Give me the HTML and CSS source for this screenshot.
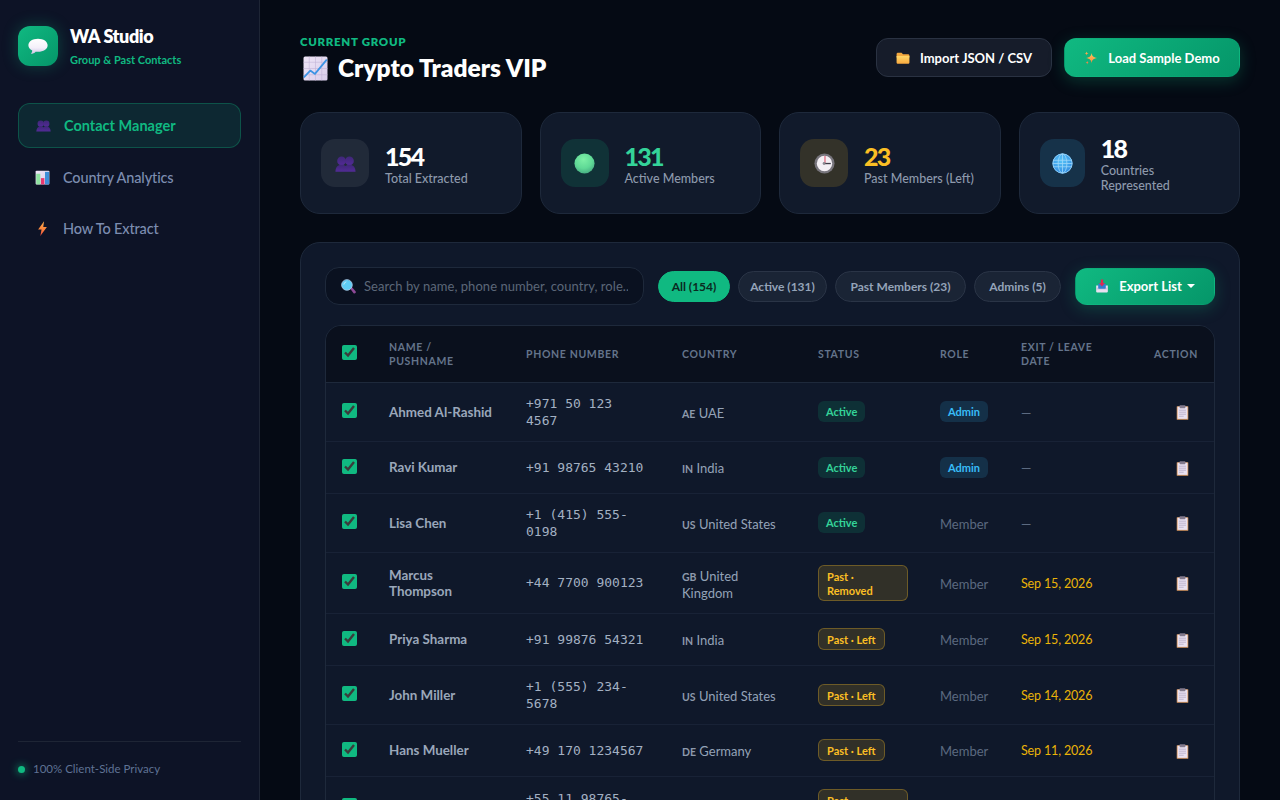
FILE: index.html
```html
<!DOCTYPE html>
<html lang="en">
<head>
<meta charset="utf-8">
<title>WA Studio</title>
<link rel="stylesheet" href="styles.css">
</head>
<body>
<svg class="sprite" aria-hidden="true">
  <defs>
    <linearGradient id="gBubble" x1="0" y1="0" x2="0" y2="1"><stop offset="0" stop-color="#ffffff"/><stop offset=".6" stop-color="#f4f0fa"/><stop offset="1" stop-color="#cfc4e6"/></linearGradient>
    <linearGradient id="gPeople" x1="0" y1="0" x2="0" y2="1"><stop offset="0" stop-color="#3f2778"/><stop offset="1" stop-color="#522b96"/></linearGradient>
    <linearGradient id="gBolt" x1="0" y1="0" x2="0" y2="1"><stop offset="0" stop-color="#ffb04a"/><stop offset=".6" stop-color="#fb7f3c"/><stop offset="1" stop-color="#e8433f"/></linearGradient>
    <linearGradient id="gPaper" x1="0" y1="0" x2="1" y2="1"><stop offset="0" stop-color="#efe6f7"/><stop offset="1" stop-color="#d9cdea"/></linearGradient>
    <linearGradient id="gFolder" x1="0" y1="0" x2="0" y2="1"><stop offset="0" stop-color="#ffd768"/><stop offset="1" stop-color="#f9a83d"/></linearGradient>
    <linearGradient id="gStar" x1="0" y1="0" x2="0" y2="1"><stop offset="0" stop-color="#ffc95c"/><stop offset="1" stop-color="#f6863f"/></linearGradient>
    <radialGradient id="gSphere" cx=".45" cy=".3" r=".8"><stop offset="0" stop-color="#7df0a6"/><stop offset=".55" stop-color="#5fd996"/><stop offset="1" stop-color="#3f9f7c"/></radialGradient>
    <radialGradient id="gGlobe" cx=".45" cy=".35" r=".75"><stop offset="0" stop-color="#57c4f7"/><stop offset="1" stop-color="#2f86de"/></radialGradient>
  </defs>
  <symbol id="i-bubble" viewBox="0 0 24 24"><path fill="url(#gBubble)" d="M12 4c6 0 10.500 3 10.500 7.200S18 18.400 12 18.400c-.9 0-1.800-.1-2.600-.2-1.200 1.500-3 2.200-5.200 2.300 1-1 1.500-2.100 1.500-3.500-2.700-1.300-4.200-3.400-4.200-5.800C1.500 7 6 4 12 4z"/></symbol>
  <symbol id="i-people" viewBox="0 0 24 24"><g fill="url(#gPeople)"><circle cx="7.500" cy="9" r="5"/><circle cx="16.500" cy="9" r="5"/><path d="M.5 21.500c0-5 2.800-8 7-8 1.700 0 3.300.5 4.500 1.400 1.200-.9 2.800-1.400 4.500-1.400 4.200 0 7 3 7 8z"/></g></symbol>
  <symbol id="i-bars" viewBox="0 0 24 24"><rect x="1" y="1" width="22" height="22" rx="1.500" fill="url(#gPaper)"/><rect x="2" y="6" width="6.500" height="17" fill="#8fe3a0"/><rect x="9.500" y="13" width="5.500" height="10" fill="#e8386f"/><rect x="16" y="3" width="6.500" height="20" fill="#3f8fd8"/></symbol>
  <symbol id="i-bolt" viewBox="0 0 24 24"><path fill="url(#gBolt)" d="M14.500 0.500 5 13.500h5.500L8.500 24 19 9.500h-5.800z"/></symbol>
  <symbol id="i-chart" viewBox="0 0 24 24"><rect x="0.500" y="0.500" width="23" height="23" rx="1.500" fill="url(#gPaper)"/><path fill="none" stroke="#c4b6d8" stroke-width=".6" d="M6 .5v23M12 .5v23M18 .5v23M.5 6h23M.5 12h23M.5 18h23"/><path fill="none" stroke="#3c94e4" stroke-width="1.700" stroke-linejoin="round" d="M.8 20.500 7 14l4.500 3.200L22.800 3.500"/></symbol>
  <symbol id="i-folder" viewBox="0 0 24 24"><path fill="#f3a83f" d="M1 5.500C1 4 2 3 3.500 3h6l2.500 2.500h8.500C22 5.500 23 6.500 23 8v3H1z"/><path fill="url(#gFolder)" d="M1 8.500h22v11c0 1.500-1 2.500-2.500 2.500h-17C2 22 1 21 1 19.500z"/></symbol>
  <symbol id="i-sparkle" viewBox="0 0 24 24"><g fill="url(#gStar)"><path d="M13 3.500c.8 5 2.800 7.400 9.500 8.500-6.700 1.100-8.700 3.500-9.500 8.800-.8-5.300-2.800-7.700-9.500-8.800C10.200 10.900 12.200 8.500 13 3.500z"/><path d="M4.500 1c.3 1.900 1 2.800 3.300 3.200C5.500 4.600 4.800 5.500 4.500 7.500 4.200 5.500 3.500 4.600 1.200 4.200 3.500 3.800 4.200 2.900 4.500 1z"/><path d="M5.500 16.500c.3 1.900 1 2.800 3 3.200-2 .4-2.700 1.300-3 3.300-.3-2-1-2.900-3-3.300 2-.4 2.700-1.300 3-3.200z" fill="#f08a4b"/></g></symbol>
  <symbol id="i-sphere" viewBox="0 0 24 24"><circle cx="12" cy="12" r="11.500" fill="url(#gSphere)"/></symbol>
  <symbol id="i-clock" viewBox="0 0 24 24"><circle cx="12" cy="12" r="11.500" fill="#77757c"/><circle cx="12" cy="12" r="8.800" fill="#f3eff4"/><path d="M12 3.500h1.100V12H12z" fill="#d9425a"/><path d="M12 11.300h7.200v1.500H12z" fill="#3d3a46"/><circle cx="11.500" cy="12" r="1.600" fill="#8a8790"/></symbol>
  <symbol id="i-globe" viewBox="0 0 24 24"><circle cx="12" cy="12" r="11.500" fill="url(#gGlobe)"/><g fill="none" stroke="#9fd8f8" stroke-width=".9"><circle cx="12" cy="12" r="11"/><ellipse cx="12" cy="12" rx="5" ry="11"/><path d="M12 1v22M1.500 8.300h21M1.500 15.700h21M1 12h22"/></g></symbol>
  <symbol id="i-search" viewBox="0 0 24 24"><path d="m14.500 15 2.500-2.500 6.200 7a2.200 2.200 0 0 1-3.100 3.100z" fill="#8e4a97"/><circle cx="9.500" cy="9.500" r="8.500" fill="#5fcdf4" stroke="#a6c8e6" stroke-width="1.400"/><path d="M4.500 9a5 5 0 0 1 4-4.500" fill="none" stroke="#d2f2fd" stroke-width="1.300"/></symbol>
  <symbol id="i-export" viewBox="0 0 24 24"><path d="M2 11h20v10.500c0 1-.8 1.500-1.500 1.500h-17C2.800 23 2 22.500 2 21.500z" fill="#e7e0f0"/><path d="M2 15h20v3H2z" fill="#cdc3de"/><rect x="5.500" y="8" width="13" height="8.500" rx="1" fill="#2f7fd0"/><path d="M10 1h4v6h3l-5 6-5-6h3z" fill="#d92c54"/></symbol>
  <symbol id="i-clip" viewBox="0 0 22 26"><rect x="1" y="2" width="20" height="23.500" rx="1" fill="#dd9a63"/><rect x="2.500" y="3" width="17" height="21" fill="#e9e1f1"/><rect x="6" y="0.500" width="10" height="5" rx="1" fill="#837a8d"/><path d="M5 9h12M5 12.500h12M5 16h12M5 19.500h8" stroke="#b2a7c3" stroke-width="1.300"/></symbol>
</svg>
<div class="app">
  <aside class="sidebar">
    <div class="brand">
      <div class="logo"><svg class="ic-logo"><use href="#i-bubble"/></svg></div>
      <div class="brand-text">
        <div class="brand-name">WA Studio</div>
        <div class="brand-sub">Group &amp; Past Contacts</div>
      </div>
    </div>
    <nav class="nav">
      <a class="nav-item active"><svg class="nav-icon"><use href="#i-people"/></svg>Contact Manager</a>
      <a class="nav-item"><svg class="nav-icon"><use href="#i-bars"/></svg>Country Analytics</a>
      <a class="nav-item"><svg class="nav-icon"><use href="#i-bolt"/></svg>How To Extract</a>
    </nav>
    <div class="side-foot"><span class="dot"></span>100% Client-Side Privacy</div>
  </aside>
  <main class="main">
    <header class="top">
      <div>
        <div class="eyebrow">CURRENT GROUP</div>
        <h1 class="title"><svg class="ic-title"><use href="#i-chart"/></svg>Crypto Traders VIP</h1>
      </div>
      <div class="actions">
        <button class="btn btn-dark"><svg class="ic-btn"><use href="#i-folder"/></svg>Import JSON / CSV</button>
        <button class="btn btn-green"><svg class="ic-btn"><use href="#i-sparkle"/></svg>Load Sample Demo</button>
      </div>
    </header>
    <section class="stats">
      <div class="stat"><div class="stat-ico ico-grey"><svg class="ic-stat"><use href="#i-people"/></svg></div><div><div class="val">154</div><div class="lab">Total Extracted</div></div></div>
      <div class="stat"><div class="stat-ico ico-green"><svg class="ic-stat"><use href="#i-sphere"/></svg></div><div><div class="val v-green">131</div><div class="lab">Active Members</div></div></div>
      <div class="stat"><div class="stat-ico ico-amber"><svg class="ic-stat"><use href="#i-clock"/></svg></div><div><div class="val v-amber">23</div><div class="lab">Past Members (Left)</div></div></div>
      <div class="stat"><div class="stat-ico ico-blue"><svg class="ic-stat"><use href="#i-globe"/></svg></div><div><div class="val">18</div><div class="lab">Countries Represented</div></div></div>
    </section>
    <section class="panel">
      <div class="toolbar">
        <label class="search"><svg class="ic-search"><use href="#i-search"/></svg><input class="search-input" type="text" placeholder="Search by name, phone number, country, role.."></label>
        <div class="chips">
          <button class="chip chip-on chip-all">All (154)</button>
          <button class="chip chip-active">Active (131)</button>
          <button class="chip chip-past">Past Members (23)</button>
          <button class="chip chip-admins">Admins (5)</button>
        </div>
        <button class="btn btn-green btn-export"><svg class="ic-btn"><use href="#i-export"/></svg>Export List<span class="caret"></span></button>
      </div>
      <div class="table-wrap">
        <table class="table">
          <colgroup>
            <col class="c1"><col class="c2"><col class="c3"><col class="c4"><col class="c5"><col class="c6"><col class="c7"><col class="c8">
          </colgroup>
          <thead>
            <tr><th><input class="cb" type="checkbox" checked></th><th>Name / Pushname</th><th>Phone Number</th><th>Country</th><th>Status</th><th>Role</th><th>Exit / Leave Date</th><th class="right">Action</th></tr>
          </thead>
          <tbody>
            <tr><td><input class="cb" type="checkbox" checked></td><td class="name">Ahmed Al-Rashid</td><td class="phone">+971 50 123 4567</td><td class="country"><span class="flag">AE</span> UAE</td><td><span class="badge b-active">Active</span></td><td><span class="badge b-admin">Admin</span></td><td class="none">—</td><td class="right"><svg class="ic-act"><use href="#i-clip"/></svg></td></tr>
            <tr><td><input class="cb" type="checkbox" checked></td><td class="name">Ravi Kumar</td><td class="phone">+91 98765 43210</td><td class="country"><span class="flag">IN</span> India</td><td><span class="badge b-active">Active</span></td><td><span class="badge b-admin">Admin</span></td><td class="none">—</td><td class="right"><svg class="ic-act"><use href="#i-clip"/></svg></td></tr>
            <tr><td><input class="cb" type="checkbox" checked></td><td class="name">Lisa Chen</td><td class="phone">+1 (415) 555-0198</td><td class="country"><span class="flag">US</span> United States</td><td><span class="badge b-active">Active</span></td><td class="member">Member</td><td class="none">—</td><td class="right"><svg class="ic-act"><use href="#i-clip"/></svg></td></tr>
            <tr><td><input class="cb" type="checkbox" checked></td><td class="name">Marcus Thompson</td><td class="phone">+44 7700 900123</td><td class="country"><span class="flag">GB</span> United Kingdom</td><td><span class="badge b-past">Past · Removed</span></td><td class="member">Member</td><td class="date">Sep 15, 2026</td><td class="right"><svg class="ic-act"><use href="#i-clip"/></svg></td></tr>
            <tr><td><input class="cb" type="checkbox" checked></td><td class="name">Priya Sharma</td><td class="phone">+91 99876 54321</td><td class="country"><span class="flag">IN</span> India</td><td><span class="badge b-past">Past · Left</span></td><td class="member">Member</td><td class="date">Sep 15, 2026</td><td class="right"><svg class="ic-act"><use href="#i-clip"/></svg></td></tr>
            <tr><td><input class="cb" type="checkbox" checked></td><td class="name">John Miller</td><td class="phone">+1 (555) 234-5678</td><td class="country"><span class="flag">US</span> United States</td><td><span class="badge b-past">Past · Left</span></td><td class="member">Member</td><td class="date">Sep 14, 2026</td><td class="right"><svg class="ic-act"><use href="#i-clip"/></svg></td></tr>
            <tr><td><input class="cb" type="checkbox" checked></td><td class="name">Hans Mueller</td><td class="phone">+49 170 1234567</td><td class="country"><span class="flag">DE</span> Germany</td><td><span class="badge b-past">Past · Left</span></td><td class="member">Member</td><td class="date">Sep 11, 2026</td><td class="right"><svg class="ic-act"><use href="#i-clip"/></svg></td></tr>
            <tr><td><input class="cb" type="checkbox" checked></td><td class="name">Carlos Silva</td><td class="phone">+55 11 98765-4321</td><td class="country"><span class="flag">BR</span> Brazil</td><td><span class="badge b-past">Past · Removed</span></td><td class="member">Member</td><td class="date">Sep 9, 2026</td><td class="right"><svg class="ic-act"><use href="#i-clip"/></svg></td></tr>
          </tbody>
        </table>
      </div>
    </section>
  </main>
</div>
</body>
</html>
```
FILE: styles.css
```css
* { box-sizing: border-box; }
html, body { margin: 0; height: 100%; }
body {
  background: #050a14;
  color: #fff;
  font-family: Lato, "Noto Sans", sans-serif;
  overflow: hidden;
}
button, input { font-family: inherit; }
.sprite { display: block; width: 0; height: 0; overflow: hidden; }
.app { display: flex; height: 100vh; }
.sidebar {
  width: 260px;
  flex: none;
  background: #0d1326;
  border-right: 1px solid #1e2535;
  padding: 26px 18px 23px;
  display: flex;
  flex-direction: column;
}
.brand { display: flex; gap: 12px; align-items: flex-start; height: 40px; }
.logo {
  width: 40px; height: 40px; border-radius: 12px;
  background: linear-gradient(135deg, #10b981, #059669);
  box-shadow: 0 0 16px rgba(16,185,129,.3);
  display: flex; align-items: center; justify-content: center;
}
.ic-logo { width: 22px; height: 22px; }
.brand-name { font-size: 18px; font-weight: 800; line-height: 20px; letter-spacing: -.4px; }
.brand-sub { font-size: 11px; font-weight: 700; color: #10b981; margin-top: 7px; line-height: 13px; }
.nav { display: flex; flex-direction: column; gap: 8px; margin-top: 37px; }
.nav-item {
  display: flex; align-items: center; gap: 13px;
  padding: 12px 17px;
  line-height: 19px;
  font-size: 14.5px; font-weight: 500; letter-spacing: -.15px;
  color: #7c8db0;
  border-radius: 12px;
}
.nav-item.active {
  background: rgba(16,185,129,.13);
  border: 1px solid rgba(16,185,129,.3);
  color: #10b981;
  font-weight: 700; letter-spacing: 0;
}
.nav-icon { width: 15px; height: 15px; flex: none; }
.side-foot {
  margin-top: auto;
  border-top: 1px solid #1e2535;
  padding-top: 19px;
  display: flex; align-items: center; gap: 8px;
  font-size: 11.5px; color: #5f7294; line-height: 16px;
}
.dot { width: 7px; height: 7px; border-radius: 50%; background: #10b981; box-shadow: 0 0 8px #10b981; }
.main { flex: 1; min-width: 0; padding: 32px 40px; overflow: hidden; }
.top { display: flex; justify-content: space-between; align-items: flex-start; }
.eyebrow { font-size: 11.5px; font-weight: 800; color: #10b981; letter-spacing: .7px; line-height: 20px; }
.title {
  margin: 0 0 0 3px; font-size: 24.5px; font-weight: 800; line-height: 32px;
  display: flex; align-items: center; gap: 10px;
}
.ic-title { width: 25px; height: 25px; }
.actions { display: flex; gap: 12px; margin-top: 6px; }
.btn {
  height: 39px; border-radius: 12px; border: 1px solid transparent;
  color: #fff; font-size: 13px; font-weight: 700;
  display: flex; align-items: center; justify-content: center; gap: 10px;
  width: 176px; padding: 0;
}
.btn-dark { background: #161c2a; border-color: #2a3242; }
.btn-green {
  background: linear-gradient(135deg, #10b981, #059669);
  box-shadow: 0 4px 16px rgba(16,185,129,.25);
}
.ic-btn { width: 14px; height: 14px; flex: none; }
.stats { display: grid; grid-template-columns: repeat(4, 1fr); gap: 18px; margin-top: 28px; }
.stat {
  height: 102px;
  background: #111a2b;
  border: 1px solid #1e293b;
  border-radius: 20px;
  padding: 20px;
  display: flex; align-items: center; gap: 16px;
}
.stat-ico {
  width: 48px; height: 48px; flex-shrink: 1; min-width: 0; border-radius: 14px;
  display: flex; align-items: center; justify-content: center;
}
.ic-stat { width: 21px; height: 21px; }
.ico-grey { background: rgba(255,255,255,.07); }
.ico-green { background: rgba(16,185,129,.15); }
.ico-amber { background: rgba(251,191,36,.15); }
.ico-blue { background: rgba(56,189,248,.15); }
.val { font-size: 25px; font-weight: 900; line-height: 30px; letter-spacing: -1.7px; }
.v-green { color: #34d399; }
.v-amber { color: #fbbf24; }
.lab { font-size: 12.5px; color: #8d99ab; line-height: 15px; font-weight: 500; }
.panel {
  margin-top: 28px;
  background: #0f182a;
  border: 1px solid #1e293b;
  border-radius: 20px;
  padding: 24px;
}
.toolbar { display: flex; align-items: center; gap: 14px; }
.search {
  width: 319px; height: 38px; flex: none;
  display: flex; align-items: center; gap: 8px;
  padding: 0 15px;
  background: #0a1120;
  border: 1px solid #1e293b;
  border-radius: 14px;
}
.ic-search { width: 15px; height: 15px; flex: none; }
.search-input {
  flex: 1; min-width: 0; background: none; border: 0; outline: 0;
  color: #fff; font-size: 13px; letter-spacing: .05px; padding: 0;
}
.search-input::placeholder { color: #5c6778; opacity: 1; }
.chips { display: flex; gap: 8px; }
.chip {
  height: 31px; padding: 0; border-radius: 16px; white-space: nowrap;
  background: #1a2435; border: 1px solid #2a3446;
  color: #94a3b8; font-size: 12px; font-weight: 700;
}
.chip-all { width: 72px; }
.chip-active { width: 89px; }
.chip-past { width: 131px; }
.chip-admins { width: 87px; }
.chip-on { background: #10b981; border-color: #10b981; color: #0b2a22; }
.btn-export { flex: none; width: 140px; height: 37px; margin-left: auto; }
.caret { width: 0; height: 0; border: 4px solid transparent; border-top: 4px solid #fff; border-bottom: 0; margin-left: -5px; }
.table-wrap {
  margin-top: 20px;
  border: 1px solid #1e293b;
  border-radius: 16px;
  overflow: hidden;
}
.table { width: 100%; border-collapse: collapse; table-layout: fixed; }
.c1 { width: 47px; } .c2 { width: 137px; } .c3 { width: 156px; } .c4 { width: 136px; }
.c5 { width: 122px; } .c6 { width: 81px; } .c7 { width: 133px; } .c8 { width: 76px; }
th {
  background: #0a101d;
  height: 56px;
  padding: 0 16px;
  text-align: left;
  font-size: 10.5px; font-weight: 700; letter-spacing: .65px; line-height: 14px;
  text-transform: uppercase;
  color: #64748b;
  border-bottom: 1px solid #1e293b;
}
td {
  height: 52px;
  padding: 12px 16px;
  font-size: 13px; line-height: 16px;
  color: #94a3b8;
  border-bottom: 1px solid #182236;
}
.right { text-align: right; }
.cb { display: block; width: 15px; height: 15px; margin: 0 0 2px; accent-color: #10b981; color-scheme: dark; }
.name { font-size: 13.4px; font-weight: 700; color: #9aa7ba; }
.phone { font-family: "DejaVu Sans Mono", monospace; line-height: 17px; color: #a3b0c2; }
.country { padding-top: 15px; }
.flag { font-size: 10.5px; font-weight: 700; color: #8d99ab; }
.badge { display: inline-block; padding: 3px 8px; border-radius: 6px; font-size: 11px; font-weight: 700; line-height: 15px; }
.b-active { background: rgba(16,185,129,.15); color: #34d399; }
.b-admin { background: rgba(56,189,248,.15); color: #38bdf8; }
.b-past { padding: 4px 8px 2px; line-height: 14px; background: rgba(251,191,36,.15); border: 1px solid rgba(251,191,36,.3); color: #fbbf24; }
.member, .none { color: #5c6a80; padding-top: 14px; }
.date { color: #eab308; font-size: 12.5px; letter-spacing: -.15px; padding-top: 14px; }
.ic-act { display: inline-block; width: 13px; height: 15px; margin-right: 9px; vertical-align: middle; }
```
